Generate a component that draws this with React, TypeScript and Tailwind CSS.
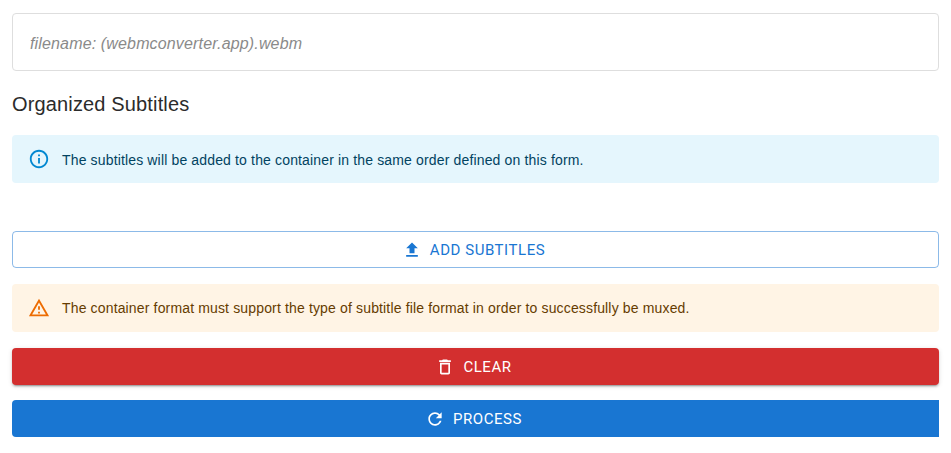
const ICONS = {
  info: "M11 7h2v2h-2zm0 4h2v6h-2zm1-9C6.48 2 2 6.48 2 12s4.48 10 10 10 10-4.48 10-10S17.52 2 12 2zm0 18c-4.41 0-8-3.59-8-8s3.59-8 8-8 8 3.59 8 8-3.59 8-8 8z",
  warning: "M12 5.99L19.53 19H4.47L12 5.99M12 2L1 21h22L12 2zm1 14h-2v2h2v-2zm0-6h-2v4h2v-4z",
  upload: "M9 16h6v-6h4l-7-7-7 7h4zm-4 2h14v2H5z",
  trash: "M6 19c0 1.1.9 2 2 2h8c1.1 0 2-.9 2-2V7H6v12zM8 9h8v10H8V9zm7.5-5l-1-1h-5l-1 1H5v2h14V4z",
  refresh:
    "M17.65 6.35C16.2 4.9 14.21 4 12 4c-4.42 0-7.99 3.58-7.99 8s3.57 8 7.99 8c3.73 0 6.84-2.55 7.73-6h-2.08c-.82 2.33-3.04 4-5.65 4-3.31 0-6-2.69-6-6s2.69-6 6-6c1.66 0 3.14.69 4.22 1.78L13 11h7V4l-2.35 2.35z",
};

function Icon({ d, className }: { d: string; className: string }) {
  return (
    <svg viewBox="0 0 24 24" fill="currentColor" className={className}>
      <path d={d} />
    </svg>
  );
}

export default function App() {
  return (
    <div className="h-[453px] w-[951px] overflow-hidden bg-white pl-3 pr-3 pt-[13px] font-['Liberation_Sans',Arial,sans-serif]">
      <div className="flex h-[58px] items-center rounded border border-[#dedede] px-[17px] pt-1 text-base italic tracking-[0.15px] text-[#8a8a8a]">
        filename: (webmconverter.app).webm
      </div>

      <h2 className="mt-[18px] h-[30px] text-xl leading-[30px] tracking-[0.15px] text-[#2b2b2b]">Organized Subtitles</h2>

      <div className="mt-[16px] flex h-[48px] items-center rounded bg-[#e5f6fd] pl-4 text-sm tracking-[0.15px] text-[#014361]">
        <Icon d={ICONS.info} className="mr-3 h-[22px] w-[22px] text-[#0288d1]" />
        <span className="mt-px">The subtitles will be added to the container in the same order defined on this form.</span>
      </div>

      <button className="mt-[48px] flex h-[37px] w-full items-center justify-center rounded border border-[#1976d2]/50 font-['Roboto',sans-serif] text-[15px] font-normal tracking-[0.55px] text-[#1976d2]">
        <Icon d={ICONS.upload} className="-ml-1 mr-2 h-5 w-5" />
        <span className="mt-px">ADD SUBTITLES</span>
      </button>

      <div className="mt-[16px] flex h-[48px] items-center rounded bg-[#fff4e5] pl-4 text-sm tracking-[0.15px] text-[#663c00]">
        <Icon d={ICONS.warning} className="mr-3 h-[22px] w-[22px] text-[#ed6c02]" />
        The container format must support the type of subtitle file format in order to successfully be muxed.
      </div>

      <button className="mt-[16px] flex h-[37px] w-full items-center justify-center rounded bg-[#d32f2f] font-['Roboto',sans-serif] text-[15px] tracking-[0.55px] text-white shadow-[0_3px_1px_-2px_rgba(0,0,0,0.2),0_2px_2px_0_rgba(0,0,0,0.14),0_1px_5px_0_rgba(0,0,0,0.12)]">
        <Icon d={ICONS.trash} className="-ml-1 mr-2 h-5 w-5" />
        <span className="mt-px">CLEAR</span>
      </button>

      <button className="mt-[15px] flex h-[37px] w-full items-center justify-center rounded-l bg-[#1976d2] font-['Roboto',sans-serif] text-[15px] tracking-[0.55px] text-white">
        <Icon d={ICONS.refresh} className="-ml-1 mr-2 h-5 w-5" />
        <span className="mt-px">PROCESS</span>
      </button>
    </div>
  );
}
